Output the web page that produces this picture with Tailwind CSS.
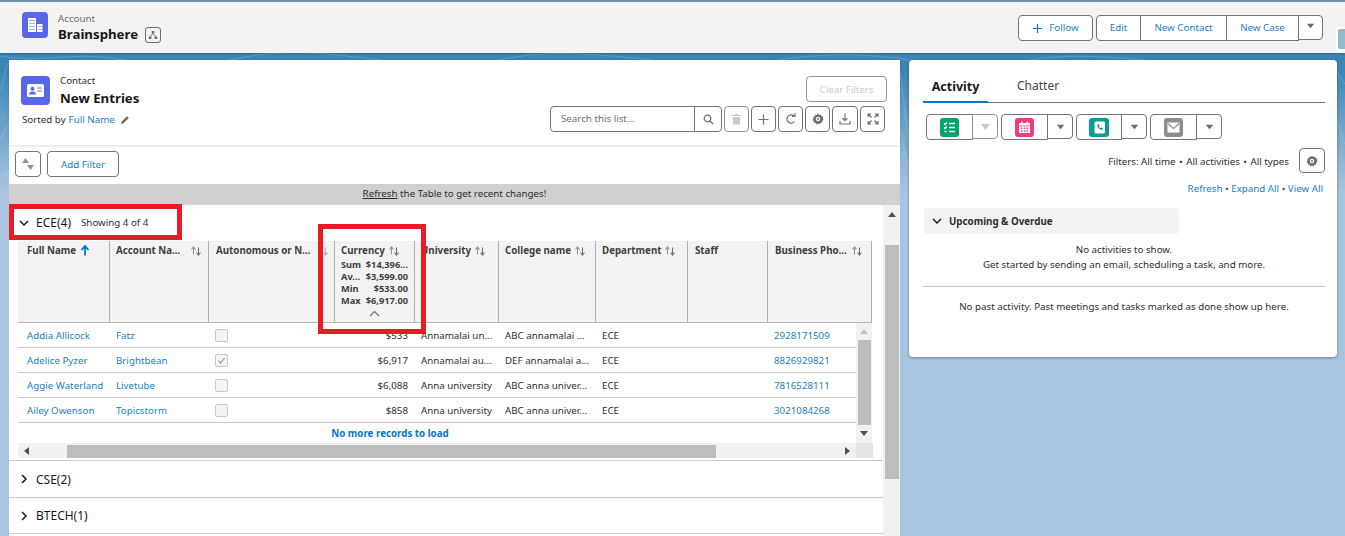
<!DOCTYPE html>
<html lang="en">
<head>
<meta charset="utf-8">
<title>Brainsphere</title>
<script src="https://cdn.jsdelivr.net/npm/@tailwindcss/browser@4"></script>
</head>
<body class="overflow-hidden">
<svg class="hidden" xmlns="http://www.w3.org/2000/svg">
  <symbol id="sort" viewBox="0 0 12 12"><path d="M3.500 9.500V2.500M1.500 4.500l2-2.500 2 2.500" fill="none" stroke="#939393" stroke-width="1.100"/><path d="M8.500 2.500v7M6.500 7.500l2 2.500 2-2.500" fill="none" stroke="#706e6b" stroke-width="1.100"/></symbol>
  <symbol id="gear" viewBox="0 0 12 12"><path fill="#706e6b" d="M6 .5l1.200 1.400 1.800-.4.5 1.800 1.800.5-.4 1.800L11.500 7l-1.400 1 .2 1.600-1.800.2L7.500 11.400 6 10.600l-1.500.8-1-1.600-1.800-.2.2-1.600L.5 7l1.100-1.400-.4-1.800L3 3.300l.5-1.800 1.300.4z"/><circle cx="6" cy="6" r="2.200" fill="#fff"/><circle cx="6" cy="6" r="1" fill="#706e6b"/></symbol>
  <symbol id="caret" viewBox="0 0 12 8"><path fill="#706e6b" d="M1 1h10L6 7z"/></symbol>
  <symbol id="chev-d" viewBox="0 0 12 12"><path d="M2 4l4 4 4-4" fill="none" stroke="#181818" stroke-width="1.500"/></symbol>
  <symbol id="chev-r" viewBox="0 0 12 12"><path d="M4 2l4 4-4 4" fill="none" stroke="#181818" stroke-width="1.500"/></symbol>
</svg>

<div class="relative isolate w-[1345px] h-[536px] overflow-hidden font-['Noto_Sans','Open_Sans',sans-serif] text-[9.75px] text-[#2e2e2e] bg-[linear-gradient(180deg,#3a86b6_0px,#3a86b6_70px,#a8c4e0_190px,#a8c4e0_536px)]">

  <!-- Faint contour pattern of the page background -->
  <svg class="absolute left-0 top-[50px] -z-10" width="1345" height="200" viewBox="0 0 1345 200" fill="none" stroke="#fff" stroke-opacity="0.18">
    <path d="M0 6c40 8 70-4 110 2s80 10 130 0 90-4 140 2 90 6 130-2 90-4 140 2 80 8 130 0 90-6 130 0 80 6 120 0 60-4 115 0"/>
    <path d="M0 40c5-8 4-20 9-28M0 90c4-6 6-12 9-16M0 130c3-4 7-6 9-8M900 20c2 20 6 50 9 70M900 80c3 12 6 30 9 40M1337 20c3 8 5 10 8 14M1337 70c4 10 5 20 8 24"/>
  </svg>

  <!-- Page header -->
  <header class="h-[53px] border-t-2 border-[#6d8fb0] bg-[#f3f3f3] flex items-start justify-between pl-[22px] pr-[22px] shadow-[0_1px_2px_rgba(0,0,0,0.2)]">
    <div class="flex items-start pt-[10px]">
      <div class="w-[26px] h-[26px] rounded-[4px] bg-[#5867e8] flex items-center justify-center">
        <svg width="16" height="16" viewBox="0 0 16 16" fill="#fff"><path d="M1 1h8v14H1z"/><path d="M10 7h5.500v8H10z"/><g fill="#5867e8"><path d="M2.500 3h1v1h-1zM4.500 3h1v1h-1zM6.500 3h1v1h-1zM2.500 6h1v1h-1zM4.500 6h1v1h-1zM6.500 6h1v1h-1zM2.500 9h1v1h-1zM4.500 9h1v1h-1zM6.500 9h1v1h-1zM2.500 12h1v1h-1zM4.500 12h1v1h-1zM6.500 12h1v1h-1zM11.500 9h1v1h-1zM13.500 9h1v1h-1zM11.500 12h1v1h-1zM13.500 12h1v1h-1z"/></g></svg>
      </div>
      <div class="ml-[10px]">
        <div class="text-[#706e6b] leading-[13px] text-[9.75px]">Account</div>
        <div class="flex items-center">
          <span class="font-bold text-[13.25px] leading-[18px] text-[#181818]">Brainsphere</span>
          <span class="ml-[7px] mt-[1px] w-[16px] h-[16px] border border-[#706e6b] rounded-[3px] flex items-center justify-center">
            <svg width="10" height="10" viewBox="0 0 10 10" fill="#706e6b"><path d="M3.700 1h2.600v2.600H3.700zM.8 6.500h2.600v2.600H.8zM6.600 6.500h2.600v2.600H6.600z"/><path d="M5 3.500L2 6.700M5 3.500l3 3.200" stroke="#706e6b" fill="none"/></svg>
          </span>
        </div>
      </div>
    </div>
    <div class="flex items-start pt-[13px] text-[#1b7fc4] text-[9.75px]">
      <button class="h-[26px] w-[75px] border border-[#747474] rounded-[4px] bg-white flex items-center justify-center gap-[6px]">
        <svg width="11" height="11" viewBox="0 0 11 11"><path d="M5.500 1v9M1 5.500h9" stroke="#0176d3" stroke-width="1.200"/></svg>Follow
      </button>
      <div class="ml-[3px] flex items-start">
        <button class="h-[26px] w-[45px] border border-[#747474] rounded-l-[4px] bg-white">Edit</button>
        <button class="h-[26px] w-[87px] -ml-px border border-[#747474] bg-white">New Contact</button>
        <button class="h-[26px] w-[73px] -ml-px border border-[#747474] bg-white">New Case</button>
        <button class="h-[25px] w-[25px] -ml-px border border-[#747474] rounded-r-[4px] bg-white flex items-center justify-center pb-[3px]"><svg width="9" height="6"><use href="#caret"/></svg></button>
      </div>
    </div>
  </header>
  <div class="absolute left-[1336px] top-[27px] w-[12px] h-[24px] rounded-l-[3px] bg-white p-[2px]"><div class="h-full bg-[#8fbccb] rounded-l-[2px]"></div></div>

  <main class="flex items-start pl-[9px] pt-[7px] gap-[9px]">
    <!-- Left panel -->
    <section class="w-[891px] h-[476px] bg-white flex flex-col shrink-0">
      <div class="h-[85px] shrink-0 flex justify-between shadow-[0_1px_3px_rgba(0,0,0,0.15)] pl-[12px] pr-[13px] pt-[16px] relative">
        <div>
          <div class="flex items-start">
            <div class="w-[29px] h-[29px] rounded-[4px] bg-[#5867e8] flex items-center justify-center">
              <svg width="17" height="13" viewBox="0 0 17 13"><rect width="17" height="13" rx="1.500" fill="#fff"/><circle cx="5.500" cy="4.800" r="2" fill="#5867e8"/><path d="M2 10.500c0-2 1.500-3 3.500-3s3.500 1 3.500 3z" fill="#5867e8"/><path d="M10.500 4h4M10.500 7h4" stroke="#5867e8" stroke-width="1.200"/></svg>
            </div>
            <div class="ml-[10px]">
              <div class="leading-[12px] -mt-[1px] text-[9.75px]">Contact</div>
              <div class="font-bold text-[13.25px] leading-[18px] mt-[2px] text-[#181818]">New Entries</div>
            </div>
          </div>
          <div class="flex items-center mt-[6px] ml-[1px] text-[9.75px] leading-[14px]">
            Sorted by<span class="ml-[3px] text-[#1b7fc4]">Full Name</span>
            <svg class="ml-[5px]" width="10" height="10" viewBox="0 0 10 10"><path d="M1 9l.5-2.300L7 1.200 8.800 3 3.300 8.500z" fill="#706e6b"/></svg>
          </div>
        </div>
        <div class="flex flex-col items-end">
          <button class="h-[26px] w-[81px] border border-[#939393] rounded-[4px] text-[#c9c9c9] text-[9.75px] pt-[2px]">Clear Filters</button>
          <div class="flex mt-[4px] pr-[2px] gap-[2px]">
            <div class="flex">
              <div class="h-[26px] w-[145px] border border-[#747474] rounded-l-[4px] pl-[10px] flex items-center text-[#706e6b] text-[9.75px]">Search this list...</div>
              <button class="h-[26px] w-[28px] -ml-px border border-[#747474] rounded-r-[4px] flex items-center justify-center"><svg width="11" height="11" viewBox="0 0 11 11" fill="none" stroke="#706e6b" stroke-width="1.200"><circle cx="4.500" cy="4.500" r="3.300"/><path d="M7 7l3 3"/></svg></button>
            </div>
            <button class="h-[26px] w-[25px] border border-[#939393] rounded-[4px] flex items-center justify-center"><svg width="11" height="12" viewBox="0 0 11 12" fill="#c9c9c9"><path d="M1 2h9v1H1zM4 .8h3V2H4zM2 4h7v7.500H2z"/></svg></button>
            <button class="h-[26px] w-[25px] border border-[#747474] rounded-[4px] flex items-center justify-center"><svg width="11" height="11" viewBox="0 0 11 11"><path d="M5.500 .5v10M.5 5.500h10" stroke="#706e6b" stroke-width="1.200"/></svg></button>
            <button class="h-[26px] w-[25px] border border-[#747474] rounded-[4px] flex items-center justify-center"><svg width="12" height="12" viewBox="0 0 12 12" fill="none" stroke="#706e6b" stroke-width="1.200"><path d="M9.500 8.500A4.200 4.200 0 1 1 9 3"/><path d="M6.800 3.300H10V.2" /></svg></button>
            <button class="h-[26px] w-[25px] border border-[#747474] rounded-[4px] flex items-center justify-center"><svg width="12" height="12"><use href="#gear"/></svg></button>
            <button class="h-[26px] w-[26px] border border-[#747474] rounded-[4px] flex items-center justify-center"><svg width="12" height="12" viewBox="0 0 12 12" fill="none" stroke="#706e6b" stroke-width="1.200"><path d="M6 .5v7M3.500 5.200L6 7.700l2.500-2.500M1 8v3h10V8"/></svg></button>
            <button class="h-[26px] w-[25px] border border-[#747474] rounded-[4px] flex items-center justify-center"><svg width="12" height="12" viewBox="0 0 12 12" fill="#706e6b"><path d="M.5.500h4L3 2l2 2-1 1-2-2L.5 4.500zM11.500.5v4L10 3 8 5 7 4l2-2L7.500.5zM.5 11.500v-4L2 9l2-2 1 1-2 2 1.500 1.500zM11.500 11.500h-4L9 10 7 8l1-1 2 2 1.500-1.500z"/></svg></button>
          </div>
        </div>
      </div>

      <div class="h-[39px] shrink-0 flex items-start gap-[6px] pl-[6px] pt-[6px]">
        <button class="h-[26px] w-[26px] border border-[#747474] rounded-[4px] flex items-center justify-center"><svg width="14" height="14" viewBox="0 0 14 14" fill="#939393"><path d="M1 6l3.500-5L8 6zM6 8h7l-3.500 5z"/></svg></button>
        <button class="h-[26px] w-[72px] border border-[#747474] rounded-[4px] text-[#1b7fc4] text-[9.75px] pt-[2px]">Add Filter</button>
      </div>

      <div class="h-[21px] shrink-0 bg-[#d0d0d0] flex items-center justify-center text-[9.75px]"><span><span class="underline">Refresh</span> the Table to get recent changes!</span></div>

      <div class="flex flex-1 min-h-0">
        <div class="w-[874px] shrink-0 flex flex-col">
          <div class="h-[36px] shrink-0 flex items-center pl-[9px]">
            <svg width="12" height="12"><use href="#chev-d"/></svg>
            <span class="ml-[6px] text-[12px] text-[#181818]">ECE(4)</span>
            <span class="ml-[10px] text-[9.75px]">Showing 4 of 4</span>
          </div>

          <div class="ml-[9px] w-[854px]">
            <div class="h-[82px] grid grid-cols-[92px_99px_126px_80px_84px_97px_92px_80px_104px] bg-[#f3f3f3] border-b border-[#b8b8b8] font-bold text-[9.75px] text-[#3e3e3c] leading-[13px]">
              <div class="border-r border-[#b0b0b0] pl-[9px] pt-[3px] flex items-start gap-[4px]">Full Name <svg class="mt-[1px]" width="10" height="11" viewBox="0 0 10 11"><path d="M5 10.500V2M1.500 5L5 1l3.500 4" fill="none" stroke="#0176d3" stroke-width="1.800"/></svg></div>
              <div class="border-r border-[#b0b0b0] pl-[6px] pt-[3px] flex items-start justify-between pr-[6px]">Account Na... <svg class="mt-px" width="12" height="12"><use href="#sort"/></svg></div>
              <div class="border-r border-[#b0b0b0] pl-[7px] pt-[3px] flex items-start justify-between pr-[5px]"><span>Autonomous or N...</span><svg class="mt-px opacity-50" width="12" height="12"><use href="#sort"/></svg></div>
              <div class="border-r border-[#b0b0b0] pl-[6px] pr-[6px] pt-[3px]">
                <div class="flex items-start gap-[3px]">Currency <svg class="mt-px" width="12" height="12"><use href="#sort"/></svg></div>
                <div class="mt-[2px] leading-[12px] text-[9.25px]">
                  <div class="flex justify-between"><span>Sum</span><span>$14,396...</span></div>
                  <div class="flex justify-between"><span>Av...</span><span>$3,599.00</span></div>
                  <div class="flex justify-between"><span>Min</span><span>$533.00</span></div>
                  <div class="flex justify-between"><span>Max</span><span>$6,917.00</span></div>
                </div>
                <div class="flex justify-center mt-[3px]"><svg width="11" height="7" viewBox="0 0 11 7"><path d="M1 6l4.500-4.500L10 6" fill="none" stroke="#706e6b" stroke-width="1.100"/></svg></div>
              </div>
              <div class="border-r border-[#b0b0b0] pl-[6px] pt-[3px] flex items-start gap-[3px]">University <svg class="mt-px" width="12" height="12"><use href="#sort"/></svg></div>
              <div class="border-r border-[#b0b0b0] pl-[6px] pt-[3px] flex items-start gap-[3px]">College name <svg class="mt-px" width="12" height="12"><use href="#sort"/></svg></div>
              <div class="border-r border-[#b0b0b0] pl-[6px] pt-[3px] flex items-start gap-[3px]">Department <svg class="mt-px" width="12" height="12"><use href="#sort"/></svg></div>
              <div class="border-r border-[#b0b0b0] pl-[7px] pt-[3px]">Staff</div>
              <div class="border-r border-[#b0b0b0] pl-[7px] pt-[3px] flex items-start justify-between pr-[8px]">Business Pho... <svg class="mt-px" width="12" height="12"><use href="#sort"/></svg></div>
            </div>

            <div class="flex h-[120px]">
              <div class="w-[838px] shrink-0 text-[9.75px]">
                <div class="h-[25px] pt-[2px] grid grid-cols-[92px_99px_126px_80px_84px_97px_92px_80px_88px] items-center border-b border-[#c9c9c9]">
                  <span class="pl-[9px] text-[#1b7fc4]">Addia Allicock</span><span class="pl-[6px] text-[#1b7fc4]">Fatz</span><span class="pl-[6px]"><span class="block w-[13px] h-[13px] -mt-[2px] border border-[#c9c9c9] rounded-[2px] bg-[#f3f3f3]"></span></span><span class="text-right pr-[7px]">$533</span><span class="pl-[6px]">Annamalai un...</span><span class="pl-[6px]">ABC annamalai ...</span><span class="pl-[6px]">ECE</span><span></span><span class="pl-[6px] text-[#1b7fc4]">2928171509</span>
                </div>
                <div class="h-[25px] pt-[2px] grid grid-cols-[92px_99px_126px_80px_84px_97px_92px_80px_88px] items-center border-b border-[#c9c9c9]">
                  <span class="pl-[9px] text-[#1b7fc4]">Adelice Pyzer</span><span class="pl-[6px] text-[#1b7fc4]">Brightbean</span><span class="pl-[6px]"><span class="w-[13px] h-[13px] -mt-[2px] border border-[#c9c9c9] rounded-[2px] bg-[#f3f3f3] flex items-center justify-center"><svg width="9" height="9" viewBox="0 0 9 9"><path d="M1.500 4.500L3.500 7l4-5" fill="none" stroke="#939393" stroke-width="1.100"/></svg></span></span><span class="text-right pr-[7px]">$6,917</span><span class="pl-[6px]">Annamalai au...</span><span class="pl-[6px]">DEF annamalai a...</span><span class="pl-[6px]">ECE</span><span></span><span class="pl-[6px] text-[#1b7fc4]">8826929821</span>
                </div>
                <div class="h-[25px] pt-[2px] grid grid-cols-[92px_99px_126px_80px_84px_97px_92px_80px_88px] items-center border-b border-[#c9c9c9]">
                  <span class="pl-[9px] text-[#1b7fc4]">Aggie Waterland</span><span class="pl-[6px] text-[#1b7fc4]">Livetube</span><span class="pl-[6px]"><span class="block w-[13px] h-[13px] -mt-[2px] border border-[#c9c9c9] rounded-[2px] bg-[#f3f3f3]"></span></span><span class="text-right pr-[7px]">$6,088</span><span class="pl-[6px]">Anna university</span><span class="pl-[6px]">ABC anna univer...</span><span class="pl-[6px]">ECE</span><span></span><span class="pl-[6px] text-[#1b7fc4]">7816528111</span>
                </div>
                <div class="h-[25px] pt-[2px] grid grid-cols-[92px_99px_126px_80px_84px_97px_92px_80px_88px] items-center border-b border-[#c9c9c9]">
                  <span class="pl-[9px] text-[#1b7fc4]">Ailey Owenson</span><span class="pl-[6px] text-[#1b7fc4]">Topicstorm</span><span class="pl-[6px]"><span class="block w-[13px] h-[13px] -mt-[2px] border border-[#c9c9c9] rounded-[2px] bg-[#f3f3f3]"></span></span><span class="text-right pr-[7px]">$858</span><span class="pl-[6px]">Anna university</span><span class="pl-[6px]">ABC anna univer...</span><span class="pl-[6px]">ECE</span><span></span><span class="pl-[6px] text-[#1b7fc4]">3021084268</span>
                </div>
                <div class="h-[20px] flex items-center justify-center pr-[94px] pt-[2px] font-bold text-[#0176d3]">No more records to load</div>
              </div>
              <div class="w-[16px] shrink-0 bg-[#f1f1f1] flex flex-col items-center">
                <svg class="mt-[6px]" width="8" height="5" viewBox="0 0 8 5"><path d="M0 5h8L4 0z" fill="#c2c2c2"/></svg>
                <div class="w-[13px] h-[85px] mt-[6px] bg-[#bdbdbd]"></div>
                <svg class="mt-[6px]" width="8" height="5" viewBox="0 0 8 5"><path d="M0 0h8L4 5z" fill="#505050"/></svg>
              </div>
            </div>

            <div class="flex h-[15px] mb-[2px]">
              <div class="w-[838px] shrink-0 bg-[#f1f1f1] flex items-end relative">
                <svg class="ml-[6px] mb-[3px]" width="5" height="8" viewBox="0 0 5 8"><path d="M5 0v8L0 4z" fill="#505050"/></svg>
                <div class="ml-[38px] w-[649px] h-[13px] bg-[#bdbdbd]"></div>
                <svg class="ml-auto mr-[6px] mb-[3px]" width="5" height="8" viewBox="0 0 5 8"><path d="M0 0v8l5-4z" fill="#505050"/></svg>
              </div>
              <div class="w-[17px] shrink-0 bg-[#e6e6e6]"></div>
            </div>
          </div>

          <div class="h-[37px] shrink-0 border-t border-[#c9c9c9] flex items-center pl-[9px]">
            <svg width="12" height="12"><use href="#chev-r"/></svg>
            <span class="ml-[6px] text-[12px] text-[#181818] pt-[2px]">CSE(2)</span>
          </div>
          <div class="h-[37px] shrink-0 border-y border-[#c9c9c9] flex items-center pl-[9px]">
            <svg width="12" height="12"><use href="#chev-r"/></svg>
            <span class="ml-[6px] text-[12px] text-[#181818]">BTECH(1)</span>
          </div>
        </div>

        <div class="w-[17px] shrink-0 bg-[#f1f1f1] flex flex-col items-center">
          <svg class="mt-[7px]" width="8" height="5" viewBox="0 0 8 5"><path d="M0 5h8L4 0z" fill="#505050"/></svg>
          <div class="w-[14px] h-[234px] mt-[28px] bg-[#bdbdbd]"></div>
        </div>
      </div>
    </section>

    <!-- Right panel -->
    <aside class="w-[428px] h-[297px] shrink-0 bg-white rounded-[4px] shadow-[0_1px_3px_rgba(0,0,0,0.35)] pl-[14px] pr-[12px]">
      <div class="h-[43px] flex items-end border-b border-[#747474]">
        <div class="w-[65px] h-[32px] -mb-px border-b-2 border-[#0176d3] text-center font-bold text-[12.5px] leading-[32px] text-[#181818]">Activity</div>
        <div class="ml-[29px] h-[32px] text-[12px] leading-[32px] text-[#444]">Chatter</div>
      </div>

      <div class="flex gap-[3px] pl-[3px] mt-[11px]">
        <div class="flex items-start">
          <div class="h-[26px] w-[47px] border border-[#747474] rounded-l-[4px] flex items-center justify-center"><span class="w-[19px] h-[19px] rounded-[3px] bg-[#04a56d] flex items-center justify-center"><svg width="13" height="13" viewBox="0 0 13 13" fill="none" stroke="#fff" stroke-width="1.300"><path d="M1 2.500l1 1 1.800-2M6 2.500h6M1 6.500l1 1 1.800-2M6 6.500h6M6 10.500h6M1.500 10.500h2"/></svg></span></div>
          <div class="h-[25px] w-[26px] -ml-px border border-[#939393] rounded-r-[4px] flex items-center justify-center"><svg width="9" height="6"><path d="M0 0h9L4.500 6z" fill="#c9c9c9"/></svg></div>
        </div>
        <div class="flex items-start">
          <div class="h-[26px] w-[47px] border border-[#747474] rounded-l-[4px] flex items-center justify-center"><span class="w-[19px] h-[19px] rounded-[3px] bg-[#f23a83] flex items-center justify-center"><svg width="13" height="13" viewBox="0 0 13 13" fill="#fff"><path d="M1 2h11v2.500H1zM3 .8h1.500V2H3zM8.500 .8H10V2H8.500z"/><path d="M1 5.300h11V12H1z"/><g fill="#f23a83"><path d="M3 6.500h1.500V8H3zM5.800 6.500h1.500V8H5.800zM8.500 6.500H10V8H8.500zM3 9.300h1.500v1.500H3zM5.800 9.300h1.500v1.500H5.800zM8.500 9.300H10v1.500H8.500z"/></g></svg></span></div>
          <div class="h-[25px] w-[26px] -ml-px border border-[#747474] rounded-r-[4px] flex items-center justify-center"><svg width="9" height="6"><use href="#caret"/></svg></div>
        </div>
        <div class="flex items-start">
          <div class="h-[26px] w-[46px] border border-[#747474] rounded-l-[4px] flex items-center justify-center"><span class="w-[20px] h-[19px] rounded-[3px] bg-[#0a9d96] flex items-center justify-center"><svg width="13" height="13" viewBox="0 0 13 13"><rect x="1.500" y="0.500" width="10.500" height="12" rx="1.500" fill="#fff"/><path d="M4.500 3.500l1.300-.6.9 1.900-.8.7c.3.800.9 1.400 1.600 1.700l.7-.8 1.800 1-.6 1.300c-3 .3-5.300-2-4.900-5.200z" fill="#0a9d96"/></svg></span></div>
          <div class="h-[25px] w-[26px] -ml-px border border-[#747474] rounded-r-[4px] flex items-center justify-center"><svg width="9" height="6"><use href="#caret"/></svg></div>
        </div>
        <div class="flex items-start">
          <div class="h-[26px] w-[47px] border border-[#747474] rounded-l-[4px] flex items-center justify-center"><span class="w-[19px] h-[19px] rounded-[3px] bg-[#8c8c8c] flex items-center justify-center"><svg width="13" height="11" viewBox="0 0 13 11"><rect x=".5" y=".5" width="12" height="10" fill="#fff"/><path d="M1 1.500l5.500 5 5.500-5" fill="none" stroke="#8c8c8c" stroke-width="1.100"/></svg></span></div>
          <div class="h-[25px] w-[26px] -ml-px border border-[#747474] rounded-r-[4px] flex items-center justify-center"><svg width="9" height="6"><use href="#caret"/></svg></div>
        </div>
      </div>

      <div class="flex items-center justify-end mt-[8px]">
        <span class="text-[9.75px] pt-[4px] flex gap-[3.5px]"><span>Filters: All time</span><span>•</span><span>All activities</span><span>•</span><span>All types</span></span>
        <button class="ml-[10px] h-[25px] w-[26px] border border-[#747474] rounded-[4px] flex items-center justify-center"><svg width="12" height="12"><use href="#gear"/></svg></button>
      </div>
      <div class="text-right text-[9.75px] leading-[14px] mt-[9px] pr-[2px] text-[#1b7fc4]">Refresh <span class="text-[#444]">•</span> Expand All <span class="text-[#444]">•</span> View All</div>

      <div class="mt-[12px] ml-px w-[255px] h-[26px] bg-[#f3f3f3] rounded-[4px] flex items-center pl-[7px] font-bold text-[9.75px] text-[#2e2e2e]">
        <svg width="12" height="12"><use href="#chev-d"/></svg><span class="ml-[6px] pt-[2px]">Upcoming &amp; Overdue</span>
      </div>
      <div class="text-center text-[9.75px] leading-[15px] mt-[8px]">No activities to show.<br>Get started by sending an email, scheduling a task, and more.</div>
      <div class="border-t border-[#c9c9c9] mt-[14px] pt-[13px] text-center text-[9.75px] leading-[14px]">No past activity. Past meetings and tasks marked as done show up here.</div>
    </aside>
  </main>

  <!-- Annotations drawn over the screenshot -->
  <div class="absolute left-[9px] top-[204px] w-[173px] h-[36px] border-[5px] border-[#e81c24]"></div>
  <div class="absolute left-[318px] top-[224px] w-[108px] h-[110px] border-[5px] border-[#e81c24]"></div>
</div>
</body>
</html>
